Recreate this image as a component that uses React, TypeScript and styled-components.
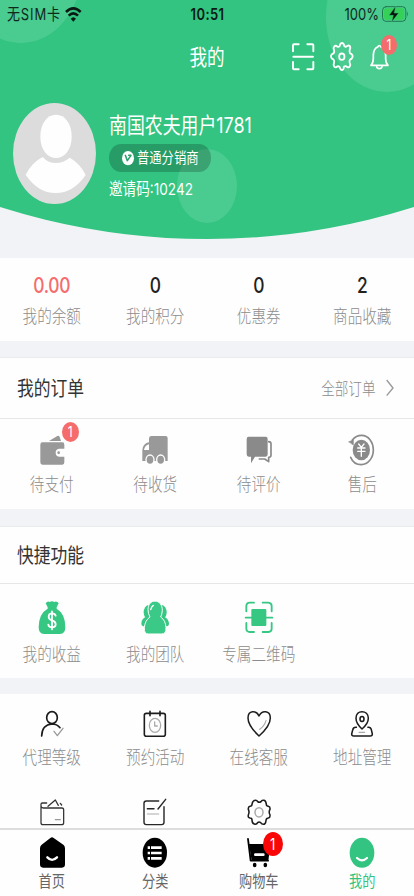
import React from "react";
import styled, { createGlobalStyle } from "styled-components";

const STRETCH = 1.2174;
const GREEN = "#32c480";

const GlobalStyle = createGlobalStyle`
  * { box-sizing: border-box; }
  html, body { margin: 0; padding: 0; }
  body { background: #f2f3f6; overflow: hidden; }
`;

const Screen = styled.div`
  width: 414px;
  height: 896px;
  display: flex;
  flex-direction: column;
  overflow: hidden;
  background: #f2f3f6;
  font-family: Inter, "Noto Sans CJK SC", sans-serif;
`;

const Text = styled.span<{ $size: number; $color?: string; $weight?: number; $track?: number; $drop?: number }>`
  display: block;
  flex: none;
  height: 18px;
  line-height: 18px;
  white-space: nowrap;
  font-size: ${(p) => p.$size}px;
  font-weight: ${(p) => p.$weight ?? 400};
  letter-spacing: ${(p) => p.$track ?? 0}px;
  color: ${(p) => p.$color ?? "#8c8c8c"};
  transform: translateY(${(p) => p.$drop ?? 0}px) scaleY(${STRETCH});
`;

const Label = styled(Text).attrs({ $size: 14.6, $weight: 300, $drop: 1.2 })``;

/* Header */
const Header = styled.header`
  position: relative;
  flex: none;
  height: 239px;
  background: ${GREEN};
  clip-path: ellipse(828px 1008px at 50% -769px);
`;

const Bubble = styled.i<{ $x: number; $y: number; $rx: number; $ry: number }>`
  position: absolute;
  left: ${(p) => p.$x - p.$rx}px;
  top: ${(p) => p.$y - p.$ry}px;
  width: ${(p) => p.$rx * 2}px;
  height: ${(p) => p.$ry * 2}px;
  border-radius: 50%;
  background: rgba(255, 255, 255, 0.12);
`;

const StatusBar = styled.div`
  position: relative;
  display: grid;
  grid-template-columns: 1fr auto 1fr;
  align-items: center;
  height: 28px;
  padding: 0 6px 0 7px;
`;

const StatusSide = styled.div<{ $end?: boolean }>`
  display: flex;
  align-items: center;
  gap: ${(p) => (p.$end ? 3 : 4.5)}px;
  justify-content: ${(p) => (p.$end ? "flex-end" : "flex-start")};
`;

const NavBar = styled.div`
  position: relative;
  display: grid;
  grid-template-columns: 1fr auto 1fr;
  align-items: center;
  height: 57px;
`;

const NavTools = styled.div`
  display: flex;
  align-items: center;
  justify-content: flex-end;
  gap: 16.5px;
  padding-right: 25px;
`;

const Profile = styled.div`
  position: relative;
  display: flex;
  align-items: flex-start;
  gap: 13px;
  padding: 18px 0 0 13px;
`;

const ProfileText = styled.div`
  display: flex;
  flex-direction: column;
  align-items: flex-start;
  padding-top: 13px;
`;

const Pill = styled.div`
  display: flex;
  align-items: center;
  gap: 3px;
  width: 102px;
  height: 28px;
  margin: 10px 0 7px;
  padding-left: 13px;
  border-radius: 12px / 14px;
  background: rgba(0, 0, 0, 0.2);
`;

/* Content */
const Panel = styled.section<{ $top: number; $height?: number; $line?: boolean }>`
  flex: ${(p) => (p.$height ? "none" : "1 1 0")};
  min-height: 0;
  overflow: hidden;
  margin-top: ${(p) => p.$top}px;
  height: ${(p) => (p.$height ? p.$height + "px" : "auto")};
  background: #fefefe;
  border-top: ${(p) => (p.$line ? "1px solid #e9ecec" : "none")};
`;

const PanelHead = styled.div<{ $height: number }>`
  display: flex;
  align-items: center;
  justify-content: space-between;
  height: ${(p) => p.$height}px;
  padding: 0 20.5px 0 17px;
  border-bottom: 1px solid #e6e8e8;
`;

const MoreLink = styled.div`
  display: flex;
  align-items: center;
  gap: 10px;
`;

const Grid = styled.div<{ $pad: number; $row?: number }>`
  display: grid;
  grid-template-columns: repeat(4, 1fr);
  grid-auto-rows: ${(p) => (p.$row ? p.$row + "px" : "auto")};
  padding-top: ${(p) => p.$pad}px;
`;

const Cell = styled.div<{ $gap: number }>`
  display: flex;
  flex-direction: column;
  align-items: center;
  gap: ${(p) => p.$gap}px;
`;

const IconSlot = styled.div<{ $height: number }>`
  position: relative;
  display: flex;
  align-items: center;
  justify-content: center;
  height: ${(p) => p.$height}px;
`;

const Badge = styled.span<{ $w: number; $h: number; $right: number; $top: number; $bg: string }>`
  position: absolute;
  right: ${(p) => p.$right}px;
  top: ${(p) => p.$top}px;
  display: flex;
  align-items: center;
  justify-content: center;
  width: ${(p) => p.$w}px;
  height: ${(p) => p.$h}px;
  border-radius: 50%;
  background: ${(p) => p.$bg};
`;

const TabBar = styled.nav`
  flex: none;
  display: grid;
  grid-template-columns: repeat(4, 1fr);
  height: 68px;
  padding-top: 7px;
  border-top: 2px solid #dcdddd;
  background: #fefefe;
`;

const Svg = styled.svg`
  display: block;
  flex: none;
  overflow: visible;
  fill: none;
  stroke-linecap: round;
  stroke-linejoin: round;
`;

/* Drawings use three units per pixel. */
function Glyph({ box, children }: { box: string; children: React.ReactNode }) {
  const [, , w, h] = box.split(" ").map(Number);
  return (
    <Svg width={w / 3} height={h / 3} viewBox={box}>
      {children}
    </Svg>
  );
}

const Wifi = () => (
  <Glyph box="198 18 50 45">
    <g stroke="#0a1a12" strokeWidth="7.500" strokeLinecap="butt">
      <path d="M201 33Q223 11 245 33" />
      <path d="M209 44Q223 30 237 44" />
    </g>
    <path d="M215 53Q223 44 231 53L223 62Z" fill="#0a1a12" />
  </Glyph>
);

const Battery = () => (
  <Glyph box="523 15 78 50">
    <rect x="524.5" y="17" width="70" height="44" rx="10" ry="12" stroke="#1f7a4d" strokeWidth="3" />
    <rect x="529" y="22" width="61" height="34" rx="6" ry="8" fill="#34d058" />
    <path d="M598 31Q603 39 598 47Z" fill="#1f7a4d" />
    <path d="M564 16L544 43H557L552 63L573 36H560Z" fill="#07140c" stroke={GREEN} strokeWidth="1.5" />
  </Glyph>
);

const Scan = () => (
  <Glyph box="255 127 66 82">
    <path
      stroke="#fff"
      strokeWidth="5.800"
      d="M258 152V134Q258 131 261 131H275M301 131H316Q319 131 319 134V152M258 184V203Q258 206 261 206H275M301 206H316Q319 206 319 203V184M259 168.500H318"
    />
  </Glyph>
);

const Gear = () => (
  <Glyph box="368 126 71 87">
    <g stroke="#fff" strokeWidth="5.400">
      <path d="M397 138Q399 129 404 129T411 138Q414 141 417 140Q423 134 427 138T427 150Q426 154 428 160Q436 162 436 169T428 179Q425 184 427 188Q431 195 427 200T417 199Q413 197 410 200Q409 210 404 210T397 201Q394 198 390 199Q385 205 381 200T380 189Q382 183 379 179Q371 176 371 169T379 160Q382 155 380 150Q377 143 381 139T390 140Q394 142 397 138Z" />
      <ellipse cx="403.500" cy="170" rx="8" ry="9.500" />
    </g>
  </Glyph>
);

const Bell = () => (
  <Glyph box="491 132 56 76">
    <g stroke="#fff" strokeWidth="5.200">
      <path d="M494 196Q501 189 501 175V165Q502 145 514 141Q519 133 524 141Q537 145 538 165V177Q538 189 545 196Z" />
      <path d="M511 200Q512 206 519 206T527 200" />
    </g>
  </Glyph>
);

const Avatar = () => (
  <Glyph box="39 39 249 303">
    <ellipse cx="163.500" cy="190.500" rx="124.500" ry="151.500" fill="#dcdcdc" />
    <path d="M168 74C195 74 215 101 215 140C215 178 194 204 168 204S121 178 121 140C121 101 141 74 168 74Z" fill="#fefefe" />
    <path d="M128 201Q144 219 167 219T209 203Q240 220 257 255Q220 309 167 309T77 254Q96 217 128 201Z" fill="#fefefe" />
  </Glyph>
);

const Verified = () => (
  <Glyph box="367 184 36 43">
    <ellipse cx="385" cy="205.500" rx="18" ry="21.500" fill="#fefefe" />
    <path d="M377 197L383 213L394 197H387" stroke="#299f6a" strokeWidth="4.500" />
  </Glyph>
);

const Chevron = () => (
  <Glyph box="533 58 24 52">
    <path d="M535 61L554 85L535 108" stroke="#999" strokeWidth="4" strokeLinecap="butt" />
  </Glyph>
);

const Wallet = () => (
  <Glyph box="113 222 84 96">
    <path d="M146 243L171 228Q176 226 178 231L182 243Z" fill="#999" />
    <path d="M126 247H186Q192 247 192 254V266H176Q166 268 166 278T176 290H192V307Q192 314 186 314H126Q120 314 120 307V254Q120 247 126 247Z" fill="#999" />
    <circle cx="175" cy="278" r="4" fill="#999" />
  </Glyph>
);

const Truck = () => (
  <Glyph box="424 222 84 96">
    <path d="M455 228H498Q504 228 504 235V303H428V270Q430 250 448 247V235Q449 228 455 228Z" fill="#999" />
    <path d="M448 253Q435 257 433 270H448Z" fill="#fefefe" />
    <g fill="#999" stroke="#fefefe" strokeWidth="4">
      <ellipse cx="451" cy="299" rx="12" ry="14" />
      <ellipse cx="483" cy="299" rx="12" ry="14" />
    </g>
  </Glyph>
);

const Chat = () => (
  <Glyph box="113 222 84 96">
    <path d="M124 230H175Q181 230 181 237V283Q181 290 175 290H143L131 310V290H124Q118 290 118 283V237Q118 230 124 230Z" fill="#8a8a8a" />
    <path d="M184 245Q191 245 191 252V286Q191 292 184 292V305L172 297H156" stroke="#8a8a8a" strokeWidth="5" />
  </Glyph>
);

const Refund = () => (
  <Glyph box="424 222 84 96">
    <ellipse cx="464" cy="270" rx="26" ry="31" fill="#8a8a8a" />
    <path d="M437 240Q448 226 465 226C485 226 500 246 500 270S484 314 464 314Q441 314 432 292" stroke="#8a8a8a" strokeWidth="5" />
    <path d="M427 245L440 240V254Z" fill="#8a8a8a" stroke="#8a8a8a" strokeWidth="2" />
    <path d="M456 252L464 262L472 252M453 264H475M453 274H475M464 262V289" stroke="#fefefe" strokeWidth="4" />
  </Glyph>
);

const MoneyBag = () => (
  <Glyph box="115 225 84 105">
    <path d="M138 235Q144 227 150 231Q157 226 164 231Q171 227 177 235L171 247V251Q197 266 197 307Q197 327 181 327H133Q117 327 117 307Q117 266 144 251V247Z" fill="#36c783" />
    <path d="M168 272Q166 265 157 265Q147 265 147 275Q147 283 157 286Q168 289 168 298Q168 307 157 307Q147 307 146 299M157 259V313" stroke="#fefefe" strokeWidth="5.500" />
  </Glyph>
);

const Team = () => (
  <Glyph box="423 225 84 105">
    <g fill="#36c783">
      <ellipse cx="447" cy="262" rx="16" ry="22" />
      <ellipse cx="484" cy="262" rx="16" ry="22" />
      <path d="M440 275Q424 280 424 296Q425 304 433 304H498Q506 304 507 296Q506 280 491 275Z" />
    </g>
    <path d="M465 228C479 228 487 241 487 256Q486 269 482 276Q497 286 498 308Q499 327 485 327H445Q432 327 433 308Q435 286 450 276Q444 266 444 254C444 239 452 228 465 228Z" fill="#3ac986" stroke="#fefefe" strokeWidth="3" />
    <path d="M452 254Q454 245 460 241" stroke="#fefefe" strokeWidth="4" />
  </Glyph>
);

const QrCode = () => (
  <Glyph box="736 225 84 105">
    <path
      stroke="#36c783"
      strokeWidth="5.500"
      d="M740 259V242Q741 233 750 233H763M789 233H806Q816 234 816 243V259M740 294V312Q741 321 750 321H763M789 321H806Q816 320 816 311V294M738 278H818"
    />
    <rect x="755" y="252" width="45" height="51" rx="3" fill="#36c783" />
  </Glyph>
);

const Agent = () => (
  <Glyph box="119 60 72 83">
    <g stroke="#1c1c1c" strokeWidth="5">
      <ellipse cx="155" cy="83" rx="16" ry="18" />
      <path d="M124 138Q125 104 155 102Q170 102 179 113" />
    </g>
    <path d="M161 124L171 137L188 115" stroke="#999" strokeWidth="4" />
  </Glyph>
);

const Schedule = () => (
  <Glyph box="430 60 72 83">
    <rect x="434" y="70" width="63" height="69" rx="6" stroke="#1c1c1c" strokeWidth="4.800" />
    <path d="M451 64V77M481 64V77" stroke="#1c1c1c" strokeWidth="4.800" />
    <g stroke="#aaa" strokeWidth="3.800">
      <ellipse cx="466" cy="106" rx="17" ry="21" />
      <path d="M465 96V108H473" />
    </g>
  </Glyph>
);

const Heart = () => (
  <Glyph box="119 60 72 83">
    <path d="M155 78C147 60 122 60 122 84C122 104 138 122 155 138C173 122 189 104 189 84C189 60 163 60 155 78Z" stroke="#1c1c1c" strokeWidth="4.500" />
    <path d="M157 118Q171 109 176 92" stroke="#aaa" strokeWidth="3.500" />
  </Glyph>
);

const Pin = () => (
  <Glyph box="430 60 72 83">
    <g stroke="#1c1c1c" strokeWidth="4.600">
      <path d="M466 117Q448 101 448 85C448 72 456 65 466 65S485 72 485 85Q485 101 466 117Z" />
      <ellipse cx="466" cy="87" rx="6" ry="7.500" />
      <path d="M449 112Q440 111 438 120L435 132Q435 138 441 138H491Q497 138 497 132L494 119Q492 111 484 112" />
    </g>
    <path d="M457 127H474" stroke="#aaa" strokeWidth="3.500" />
  </Glyph>
);

const Folder = () => (
  <Glyph box="119 322 72 83">
    <path
      stroke="#333"
      strokeWidth="3.800"
      d="M122 350V341Q122 337 126 337H139M122 346Q123 352 129 352H185Q190 352 190 358V396Q190 402 184 402H128Q122 402 122 396V346M143 347L165 328L174 344M180 338L184 343"
    />
    <path d="M165 387H180" stroke="#999" strokeWidth="3.500" />
  </Glyph>
);

const Note = () => (
  <Glyph box="430 322 72 83">
    <path
      stroke="#282828"
      strokeWidth="4.300"
      d="M477 331H440Q433 331 433 338V395Q433 402 440 402H486Q493 402 493 395V348M498 326L475 355M443 354H463"
    />
    <path d="M443 370H477" stroke="#aaa" strokeWidth="3.500" />
  </Glyph>
);

const Settings = () => (
  <Glyph box="119 322 72 83">
    <path d="M145 329Q149 329 151 333Q156 337 161 333Q164 327 170 329T177 341Q177 347 183 347Q189 348 188 356Q183 364 188 373Q189 381 183 382Q177 382 176 389Q175 401 168 401Q163 401 160 396Q155 392 151 396Q148 402 141 400T134 388Q134 382 128 382Q121 381 123 373Q127 364 123 356Q122 348 128 347Q134 347 134 341Q136 329 145 329Z" stroke="#1c1c1c" strokeWidth="4.600" />
    <ellipse cx="155" cy="365" rx="12" ry="14" stroke="#aaa" strokeWidth="4.500" />
  </Glyph>
);

const Home = () => (
  <Glyph box="117 440 78 93">
    <path d="M151 443Q156 439 161 443L190 463Q195 467 195 474V522Q195 532 186 532H129Q120 532 120 522V474Q120 467 125 463Z" fill="#000" />
    <path d="M142 501Q156 516 171 501" stroke="#fff" strokeWidth="7" />
  </Glyph>
);

const Category = () => (
  <Glyph box="429 440 78 93">
    <ellipse cx="467.500" cy="487" rx="36.500" ry="45" fill="#000" />
    <path
      d="M456 472H488M456 488H488M456 504H488M446 472H453M446 488H453M446 504H453"
      stroke="#fff"
      strokeWidth="8"
      strokeLinecap="butt"
    />
  </Glyph>
);

const Cart = () => (
  <Glyph box="117 440 78 93">
    <path d="M123 446L131 511H183" stroke="#000" strokeWidth="5.500" />
    <path d="M126 461H190L184 512H134Z" fill="#000" />
    <path d="M145 493H169" stroke="#fff" strokeWidth="8" />
    <ellipse cx="143" cy="524" rx="5.500" ry="6.500" fill="#000" />
    <ellipse cx="175" cy="524" rx="5.500" ry="6.500" fill="#000" />
  </Glyph>
);

const Me = () => (
  <Glyph box="428 440 78 93">
    <ellipse cx="467" cy="487.500" rx="37" ry="45" fill={GREEN} />
    <path d="M452 503Q467 517 482 503" stroke="#fff" strokeWidth="6.500" />
  </Glyph>
);

const stats = [
  { value: "0.00", label: "我的余额", color: "#f56c6c" },
  { value: "0", label: "我的积分", color: "#222" },
  { value: "0", label: "优惠券", color: "#222" },
  { value: "2", label: "商品收藏", color: "#222" },
];

const orders = [
  { icon: <Wallet />, label: "待支付", count: 1 },
  { icon: <Truck />, label: "待收货" },
  { icon: <Chat />, label: "待评价" },
  { icon: <Refund />, label: "售后" },
];

const shortcuts = [
  { icon: <MoneyBag />, label: "我的收益" },
  { icon: <Team />, label: "我的团队" },
  { icon: <QrCode />, label: "专属二维码" },
];

const menu = [
  { icon: <Agent />, label: "代理等级" },
  { icon: <Schedule />, label: "预约活动" },
  { icon: <Heart />, label: "在线客服" },
  { icon: <Pin />, label: "地址管理" },
  { icon: <Folder /> },
  { icon: <Note /> },
  { icon: <Settings /> },
];

const tabs = [
  { icon: <Home />, label: "首页" },
  { icon: <Category />, label: "分类" },
  { icon: <Cart />, label: "购物车", count: 1 },
  { icon: <Me />, label: "我的", active: true },
];

export default function App() {
  return (
    <Screen>
      <GlobalStyle />
      <Header>
        <Bubble $x={21} $y={-31.4} $rx={60.7} $ry={74} />
        <Bubble $x={387} $y={17} $rx={61.3} $ry={74.6} />
        <Bubble $x={206.8} $y={186} $rx={30.2} $ry={37} />
        <StatusBar>
          <StatusSide>
            <Text $size={13} $color="#10291d" $track={0.85}>无SIM卡</Text>
            <Wifi />
          </StatusSide>
          <Text $size={13} $color="#0a1a12" $weight={600} $track={0.4}>10:51</Text>
          <StatusSide $end>
            <Text $size={13} $color="#10291d">100%</Text>
            <Battery />
          </StatusSide>
        </StatusBar>
        <NavBar>
          <span />
          <Text $size={17.6} $color="#fff" $drop={0.7}>我的</Text>
          <NavTools>
            <Scan />
            <Gear />
            <IconSlot $height={25.3}>
              <Bell />
              <Badge $w={16} $h={20} $right={-8} $top={-9} $bg="#f56c6c">
                <Text $size={12} $color="#fff">1</Text>
              </Badge>
            </IconSlot>
          </NavTools>
        </NavBar>
        <Profile>
          <Avatar />
          <ProfileText>
            <Text $size={17.9} $color="#fff" $drop={0.8}>南国农夫用户1781</Text>
            <Pill>
              <Verified />
              <Text $size={12.3} $color="#fff" $drop={0.4}>普通分销商</Text>
            </Pill>
            <Text $size={13.6} $color="#fff" $drop={0.5}>邀请码:10242</Text>
          </ProfileText>
        </Profile>
      </Header>

      <Panel $top={19} $height={83}>
        <Grid $pad={19}>
          {stats.map((s) => (
            <Cell key={s.label} $gap={12}>
              <Text $size={17.4} $weight={500} $color={s.color} $track={-0.2}>{s.value}</Text>
              <Label>{s.label}</Label>
            </Cell>
          ))}
        </Grid>
      </Panel>

      <Panel $top={16} $height={152} $line>
        <PanelHead $height={61}>
          <Text $size={16.8} $color="#333" $drop={1}>我的订单</Text>
          <MoreLink>
            <Text $size={13.6} $weight={300} $drop={0.5}>全部订单</Text>
            <Chevron />
          </MoreLink>
        </PanelHead>
        <Grid $pad={15}>
          {orders.map((o) => (
            <Cell key={o.label} $gap={9}>
              <IconSlot $height={32}>
                {o.icon}
                {o.count && (
                  <Badge $w={17} $h={20} $right={-13} $top={-12} $bg="#f56c6c">
                    <Text $size={12} $color="#fff">{o.count}</Text>
                  </Badge>
                )}
              </IconSlot>
              <Label>{o.label}</Label>
            </Cell>
          ))}
        </Grid>
      </Panel>

      <Panel $top={17} $height={152} $line>
        <PanelHead $height={57}>
          <Text $size={16.8} $color="#333" $drop={1}>快捷功能</Text>
        </PanelHead>
        <Grid $pad={16}>
          {shortcuts.map((s) => (
            <Cell key={s.label} $gap={9.5}>
              {s.icon}
              <Label>{s.label}</Label>
            </Cell>
          ))}
        </Grid>
      </Panel>

      <Panel $top={16}>
        <Grid $pad={16} $row={87.5}>
          {menu.map((m, i) => (
            <Cell key={i} $gap={10.5}>
              {m.icon}
              {m.label && <Label>{m.label}</Label>}
            </Cell>
          ))}
        </Grid>
      </Panel>

      <TabBar>
        {tabs.map((t) => (
          <Cell key={t.label} $gap={4}>
            <IconSlot $height={31}>
              {t.icon}
              {t.count && (
                <Badge $w={20} $h={24} $right={-11} $top={-5} $bg="#f90606">
                  <Text $size={13} $color="#fff">{t.count}</Text>
                </Badge>
              )}
            </IconSlot>
            <Text $size={13.2} $color={t.active ? GREEN : "#666"}>{t.label}</Text>
          </Cell>
        ))}
      </TabBar>
    </Screen>
  );
}
